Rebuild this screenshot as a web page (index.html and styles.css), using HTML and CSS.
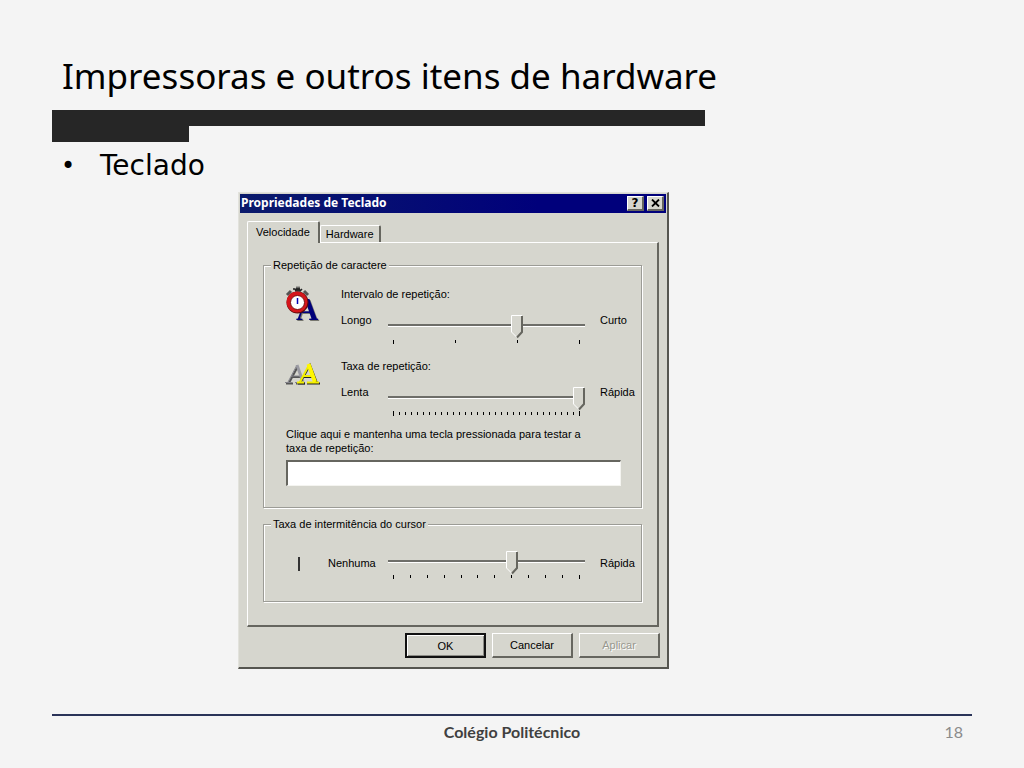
FILE: index.html
```
<!DOCTYPE html>
<html lang="pt-BR">
<head>
    <meta charset="UTF-8">
    <meta name="viewport" content="width=device-width, initial-scale=1.0">
    <title>Impressoras e outros itens de hardware</title>
    <link rel="stylesheet" href="styles.css">
</head>
<body>
    <header>
        <h1>Impressoras e outros itens de hardware</h1>
        <div class="rule">
            <div class="rule-thick"></div>
            <div class="rule-thin"></div>
        </div>
    </header>

    <main>
        <ul class="topics">
            <li>Teclado</li>
        </ul>

        <section class="dialog" role="dialog" aria-labelledby="dialogTitle">
            <div class="titlebar">
                <h2 id="dialogTitle">Propriedades de Teclado</h2>
                <button type="button" class="title-button" aria-label="Ajuda">?</button>
                <button type="button" class="title-button" aria-label="Fechar">
                    <svg width="9" height="8" viewBox="0 0 9 8"><path d="M1 0.5L8 7.5M8 0.5L1 7.5" stroke="#000" stroke-width="1.8"/></svg>
                </button>
            </div>

            <div class="tabs" role="tablist">
                <button type="button" class="tab active" role="tab" aria-selected="true">Velocidade</button>
                <button type="button" class="tab" role="tab" aria-selected="false">Hardware</button>
            </div>

            <div class="panel" role="tabpanel">
                <fieldset class="repeat">
                    <legend>Repetição de caractere</legend>
                    <div class="setting">
                        <svg class="icon" width="36" height="36" viewBox="0 0 36 36" aria-hidden="true">
                            <text x="10" y="33" class="glyph" fill="#00007b">A</text>
                            <path d="M1 8l4-4M18 4l4 4" stroke="#555" stroke-width="3"/>
                            <path d="M7 2h2l1 2 1-3 1 3 1-3 1 3 2-2M12 3v3" stroke="#222" stroke-width="1.5" fill="none"/>
                            <circle cx="11.500" cy="15.500" r="11" fill="#5c0b0b"/>
                            <circle cx="11" cy="15" r="10.500" fill="#d5151b"/>
                            <circle cx="11.500" cy="15.500" r="7" fill="#fff" stroke="#7b1010"/>
                            <path d="M11.500 11v6" stroke="#0000b5" stroke-width="1.500"/>
                        </svg>
                        <label class="setting-title" for="delay">Intervalo de repetição:</label>
                        <span class="low">Longo</span>
                        <div class="slider">
                            <input type="range" id="delay" min="0" max="3" value="2">
                            <svg class="ticks" viewBox="0 0 197 5" aria-hidden="true">
                                <path d="M5.500 1v4M67.500 1v3M129.500 1v3M191.500 1v4" stroke="#000"/>
                            </svg>
                        </div>
                        <span class="high">Curto</span>
                    </div>
                    <div class="setting">
                        <svg class="icon" width="36" height="26" viewBox="0 0 36 26" aria-hidden="true">
                            <!-- grey A behind, yellow A in front -->
                            <path d="M0 24.500h7M10 24.500h9M3 24L12 7M6 18h9" stroke="#555" stroke-width="2" fill="none"/>
                            <path d="M-1 23.500h7M9 23.500h9M2 23L11 6M5 17h9" stroke="#85858c" fill="none"/>
                            <path d="M11 6l6 17" stroke="#9a9aa2" stroke-width="3"/>
                            <path d="M12 24.500h7M21 24.500h13M14 24L24 6l7 18M17 18h10" stroke="#222" stroke-width="2" fill="none"/>
                            <path d="M11 23.500h7M21 23.500h12M14 23L23 6M17 17h9" stroke="#f2ee00" stroke-width="2" fill="none"/>
                            <path d="M22.500 5l6.500 18" stroke="#fff600" stroke-width="4"/>
                        </svg>
                        <label class="setting-title" for="rate">Taxa de repetição:</label>
                        <span class="low">Lenta</span>
                        <div class="slider">
                            <input type="range" id="rate" min="0" max="31" value="31">
                            <svg class="ticks" viewBox="0 0 197 5" aria-hidden="true">
                                <path d="M5 2.500h187" stroke="#000" stroke-width="3" stroke-dasharray="1 5"/>
                                <path d="M5.500 0v5M191.500 0v5" stroke="#000"/>
                            </svg>
                        </div>
                        <span class="high">Rápida</span>
                    </div>
                    <label class="test-label" for="test">Clique aqui e mantenha uma tecla pressionada para testar a taxa de repetição:</label>
                    <input type="text" id="test" class="test-input">
                </fieldset>

                <fieldset class="blink">
                    <legend>Taxa de intermitência do cursor</legend>
                    <div class="setting single">
                        <span class="caret"></span>
                        <label class="low" for="blink">Nenhuma</label>
                        <div class="slider">
                            <input type="range" id="blink" min="0" max="11" value="7">
                            <svg class="ticks" viewBox="0 0 197 5" aria-hidden="true">
                                <path d="M5.500 0v4M22.500 0v3M39.500 0v3M56.500 0v3M73.500 0v3M89.500 0v3M106.500 0v3M123.500 0v3M140.500 0v3M157.500 0v3M174.500 0v3M191.500 0v4" stroke="#000"/>
                            </svg>
                        </div>
                        <span class="high">Rápida</span>
                    </div>
                </fieldset>
            </div>

            <div class="actions">
                <button type="button" class="default">OK</button>
                <button type="button">Cancelar</button>
                <button type="button" disabled>Aplicar</button>
            </div>
        </section>
    </main>

    <footer>
        <span class="school">Colégio Politécnico</span>
        <span class="page-number">18</span>
    </footer>
</body>
</html>
```
FILE: styles.css
```
* {
    box-sizing: border-box;
}

body {
    margin: 0;
    padding: 52px 52px 20px;
    min-height: 100vh;
    display: flex;
    flex-direction: column;
    background-color: #f4f4f4;
    color: #000;
    font-family: "DejaVu Sans", sans-serif;
}

h1 {
    margin: 0 10px 10px;
    font-family: "Noto Sans", sans-serif;
    font-size: 35px;
    font-weight: 400;
    line-height: 48px;
}

.rule {
    display: flex;
    width: 71%;
}

.rule-thick {
    width: 21%;
    height: 32px;
    background-color: #262626;
}

.rule-thin {
    flex: 1;
    height: 16px;
    background-color: #262626;
}

.topics {
    margin: 6px 0 8px;
    padding: 0 9px;
    list-style: none;
    font-size: 28px;
    line-height: 36px;
}

.topics li {
    display: flex;
}

.topics li::before {
    content: "•";
    width: 39px;
    font-size: 24px;
}

/* dialog window */
.dialog {
    max-width: 431px;
    margin-left: 186px;
    padding: 1px 1px 9px;
    border: 1px solid #e2e2dc;
    border-right: 2px solid #55554f;
    border-bottom: 2px solid #55554f;
    background-color: #d6d6ce;
    font-family: "Liberation Sans", Arial, sans-serif;
    font-size: 11px;
    line-height: 14px;
}

.dialog button {
    padding: 0;
    border: 1px solid #fff;
    border-right: 2px solid #66665f;
    border-bottom: 2px solid #66665f;
    border-radius: 0;
    background-color: #d6d6ce;
    color: #000;
    font-family: inherit;
    font-size: 11px;
    line-height: 14px;
}

.titlebar {
    display: flex;
    align-items: center;
    gap: 3px;
    height: 19px;
    padding: 0 2px 1px 1px;
    background: linear-gradient(to right, #0a1a6b, #00007b 70%);
}

.titlebar h2 {
    flex: 1;
    margin: 0;
    color: #fff;
    font-family: "Noto Sans", sans-serif;
    font-size: 12px;
    font-weight: 700;
}

.dialog .title-button {
    display: flex;
    align-items: center;
    justify-content: center;
    width: 17px;
    height: 15px;
    font-family: "DejaVu Sans", sans-serif;
    font-size: 12px;
    font-weight: 700;
}

.tabs {
    display: flex;
    align-items: flex-end;
    margin: 8px 7px 0;
}

.dialog .tab {
    height: 17px;
    padding: 0 5px;
    border-bottom: none;
    border-radius: 2px 2px 0 0;
}

.dialog .tab.active {
    height: 22px;
    margin-bottom: -1px;
    padding: 0 8px 2px;
    position: relative;
}

.panel {
    margin: 0 7px;
    padding: 15px 15px 23px;
    border: 1px solid #fff;
    border-right: 2px solid #66665f;
    border-bottom: 2px solid #66665f;
}

fieldset {
    min-width: 0;
    margin: 0;
    padding: 0 4px 21px 22px;
    border: 1px solid #9c9c96;
    box-shadow: 1px 1px 0 #fff, inset 1px 1px 0 #fff;
}

legend {
    margin-left: -15px;
    padding: 0 2px;
    background-color: #d6d6ce;
}

.repeat {
    padding-top: 15px;
}

.blink {
    margin-top: 9px;
    padding-top: 20px;
}

.setting {
    display: grid;
    grid-template-columns: 55px 47px 1fr 37px;
    grid-template-areas:
        "icon title title title"
        "icon low slider high";
    row-gap: 12px;
    align-items: start;
    margin-bottom: 15px;
}

.setting + .test-label {
    margin-top: -4px;
}

.icon {
    grid-area: icon;
    overflow: visible;
}

.glyph {
    font-family: "Liberation Serif", serif;
    font-size: 31px;
    font-weight: 700;
    filter: drop-shadow(1px 1px 0 #77776f);
}

.setting-title {
    grid-area: title;
}

.low {
    grid-area: low;
}

.high {
    grid-area: high;
    white-space: nowrap;
}

.slider {
    grid-area: slider;
    margin: 2px 15px 0 0;
}

.single {
    grid-template-columns: 42px 60px 1fr 37px;
    grid-template-areas: "icon low slider high";
    margin-bottom: 0;
}

.single .slider {
    margin-top: 0;
}

.single .low,
.single .high {
    margin-top: 5px;
}

.caret {
    grid-area: icon;
    width: 2px;
    height: 14px;
    margin: 6px 0 0 12px;
    background-color: #333;
}

input[type="range"] {
    -webkit-appearance: none;
    appearance: none;
    display: block;
    width: 100%;
    height: 24px;
    margin: 0;
    background: linear-gradient(#6e6e69 2px, #fff 2px) 0 9px / 100% 3px no-repeat;
}

input[type="range"]::-webkit-slider-thumb {
    -webkit-appearance: none;
    appearance: none;
    width: 12px;
    height: 24px;
    background: url("data:image/svg+xml,%3Csvg xmlns='http://www.w3.org/2000/svg' width='12' height='24'%3E%3Cpath d='M0 0h12v17l-6 6-6-6z' fill='%23d6d6ce'/%3E%3Cpath d='M6 22.500L.5 17V.5H11' fill='none' stroke='%23fff'/%3E%3Cpath d='M11 1v16l-5 5.500' fill='none' stroke='%2366665f' stroke-width='2'/%3E%3C/svg%3E") no-repeat;
}

.ticks {
    display: block;
    width: 100%;
    height: 5px;
}

.test-label {
    display: block;
    max-width: 310px;
}

.test-input {
    display: block;
    width: calc(100% - 16px);
    height: 26px;
    margin-top: 5px;
    padding: 2px 4px;
    border: 1px solid #f4f4f0;
    border-top: 2px solid #66665f;
    border-left: 2px solid #66665f;
    background-color: #fff;
    font-family: inherit;
    font-size: 11px;
}

.actions {
    display: flex;
    justify-content: flex-end;
    gap: 6px;
    margin: 6px 6px 0;
}

.dialog .actions button {
    width: 81px;
    height: 25px;
}

.dialog .actions .default {
    border: 2px solid #111;
    box-shadow: inset 1px 1px 0 #fff, inset -1px -1px 0 #8c8c86;
}

.dialog .actions button:disabled {
    color: #98988f;
    text-shadow: 1px 1px 0 #fff;
}

footer {
    display: grid;
    grid-template-columns: 1fr auto 1fr;
    margin-top: auto;
    padding: 4px 9px;
    border-top: 2px solid #2a3358;
    font-family: Lato, sans-serif;
    font-size: 16px;
    line-height: 24px;
}

.school {
    grid-column: 2;
    color: #404040;
    font-weight: 700;
}

.page-number {
    color: #8b8b8b;
    text-align: right;
}
```
